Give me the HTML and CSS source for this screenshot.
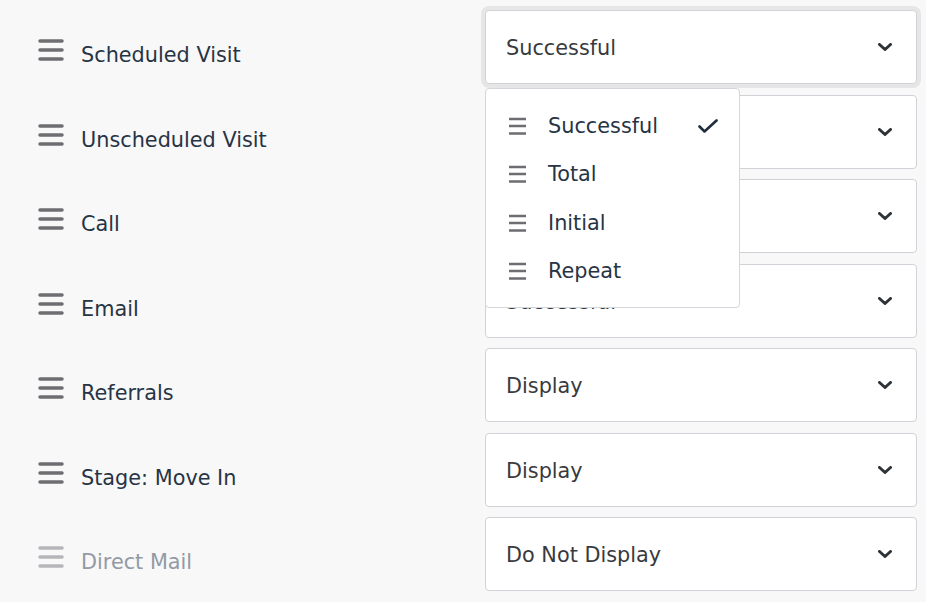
FILE: index.html
```html
<!DOCTYPE html>
<html lang="en">
<head>
    <meta charset="UTF-8">
    <meta name="viewport" content="width=device-width, initial-scale=1.0">
    <title>Activity Display Settings</title>
    <link rel="stylesheet" href="styles.css">
</head>
<body>
    <div class="settings">
        <div class="row">
            <div class="label">
                <svg class="grip" viewBox="0 0 26 22"><path d="M2 2h22M2 11h22M2 20h22"/></svg>
                <span>Scheduled Visit</span>
            </div>
            <div class="select-wrap">
                <div class="select focused">
                    <span>Successful</span>
                    <svg class="chevron" viewBox="0 0 14 8"><path d="M1.5 1.5l5.5 5 5.5-5"/></svg>
                </div>
                <ul class="menu">
                    <li>
                        <svg class="menu-grip" viewBox="0 0 19 18"><path d="M1 2h17M1 9h17M1 16.5h17"/></svg>
                        <span>Successful</span>
                        <svg class="check" viewBox="0 0 20 14"><path d="M1.5 7.5l5 5 12-11"/></svg>
                    </li>
                    <li>
                        <svg class="menu-grip" viewBox="0 0 19 18"><path d="M1 2h17M1 9h17M1 16.5h17"/></svg>
                        <span>Total</span>
                    </li>
                    <li>
                        <svg class="menu-grip" viewBox="0 0 19 18"><path d="M1 2h17M1 9h17M1 16.5h17"/></svg>
                        <span>Initial</span>
                    </li>
                    <li>
                        <svg class="menu-grip" viewBox="0 0 19 18"><path d="M1 2h17M1 9h17M1 16.5h17"/></svg>
                        <span>Repeat</span>
                    </li>
                </ul>
            </div>
        </div>

        <div class="row">
            <div class="label">
                <svg class="grip" viewBox="0 0 26 22"><path d="M2 2h22M2 11h22M2 20h22"/></svg>
                <span>Unscheduled Visit</span>
            </div>
            <div class="select">
                <span>Successful</span>
                <svg class="chevron" viewBox="0 0 14 8"><path d="M1.5 1.5l5.5 5 5.5-5"/></svg>
            </div>
        </div>

        <div class="row">
            <div class="label">
                <svg class="grip" viewBox="0 0 26 22"><path d="M2 2h22M2 11h22M2 20h22"/></svg>
                <span>Call</span>
            </div>
            <div class="select">
                <span>Successful</span>
                <svg class="chevron" viewBox="0 0 14 8"><path d="M1.5 1.5l5.5 5 5.5-5"/></svg>
            </div>
        </div>

        <div class="row">
            <div class="label">
                <svg class="grip" viewBox="0 0 26 22"><path d="M2 2h22M2 11h22M2 20h22"/></svg>
                <span>Email</span>
            </div>
            <div class="select">
                <span>Successful</span>
                <svg class="chevron" viewBox="0 0 14 8"><path d="M1.5 1.5l5.5 5 5.5-5"/></svg>
            </div>
        </div>

        <div class="row">
            <div class="label">
                <svg class="grip" viewBox="0 0 26 22"><path d="M2 2h22M2 11h22M2 20h22"/></svg>
                <span>Referrals</span>
            </div>
            <div class="select">
                <span>Display</span>
                <svg class="chevron" viewBox="0 0 14 8"><path d="M1.5 1.5l5.5 5 5.5-5"/></svg>
            </div>
        </div>

        <div class="row">
            <div class="label">
                <svg class="grip" viewBox="0 0 26 22"><path d="M2 2h22M2 11h22M2 20h22"/></svg>
                <span>Stage: Move In</span>
            </div>
            <div class="select">
                <span>Display</span>
                <svg class="chevron" viewBox="0 0 14 8"><path d="M1.5 1.5l5.5 5 5.5-5"/></svg>
            </div>
        </div>

        <div class="row disabled">
            <div class="label">
                <svg class="grip" viewBox="0 0 26 22"><path d="M2 2h22M2 11h22M2 20h22"/></svg>
                <span>Direct Mail</span>
            </div>
            <div class="select">
                <span>Do Not Display</span>
                <svg class="chevron" viewBox="0 0 14 8"><path d="M1.5 1.5l5.5 5 5.5-5"/></svg>
            </div>
        </div>
    </div>
</body>
</html>
```

FILE: styles.css
```css
body {
    margin: 0;
    padding: 0;
    background-color: #f8f8f9;
    font-family: "DejaVu Sans", "Open Sans", sans-serif;
    overflow: hidden;
}

.settings {
    display: flex;
    flex-direction: column;
    gap: 10.5px;
    padding-top: 10px;
}

.row {
    display: grid;
    grid-template-columns: 485px 432px;
    height: 74px;
}

.label {
    display: flex;
    align-items: center;
    padding-left: 38px;
    padding-top: 16px;
    font-size: 20.8px;
    color: #273444;
}

.grip {
    width: 26px;
    height: 22px;
    margin-right: 17px;
    margin-top: -10px;
    fill: none;
    stroke: #6d6d72;
    stroke-width: 3.5;
    stroke-linecap: round;
}

.disabled .label {
    color: #939aa3;
}

.disabled .grip {
    stroke: #b6b6ba;
}

.select-wrap {
    position: relative;
}

.select {
    box-sizing: border-box;
    height: 74px;
    display: flex;
    align-items: center;
    justify-content: space-between;
    padding: 2px 24px 0 20px;
    background-color: #fff;
    border: 1px solid #cfd3d8;
    border-radius: 4px;
    font-size: 20.8px;
    color: #383a3e;
}

.select .chevron {
    margin-top: -2px;
}

.select.focused {
    box-shadow: 0 0 0 4px #e6e6e7;
}

.chevron {
    width: 14px;
    height: 8px;
    fill: none;
    stroke: #2e3338;
    stroke-width: 3;
    stroke-linecap: round;
    stroke-linejoin: round;
}

.menu {
    position: absolute;
    top: 78px;
    left: 0;
    width: 255px;
    box-sizing: border-box;
    margin: 0;
    padding: 13px 0 12px;
    list-style: none;
    background-color: #fff;
    border: 1px solid #d3d6da;
    border-radius: 4px;
    z-index: 2;
}

.menu li {
    display: flex;
    align-items: center;
    height: 48.3px;
    padding-left: 22px;
    font-size: 20.8px;
    color: #273444;
}

.menu-grip {
    width: 19px;
    height: 18px;
    margin-right: 21px;
    fill: none;
    stroke: #6d6d72;
    stroke-width: 2.6;
}

.check {
    width: 20px;
    height: 14px;
    margin-left: auto;
    margin-right: 21px;
    fill: none;
    stroke: #1f2d3d;
    stroke-width: 2.6;
    stroke-linecap: round;
    stroke-linejoin: round;
}
```
